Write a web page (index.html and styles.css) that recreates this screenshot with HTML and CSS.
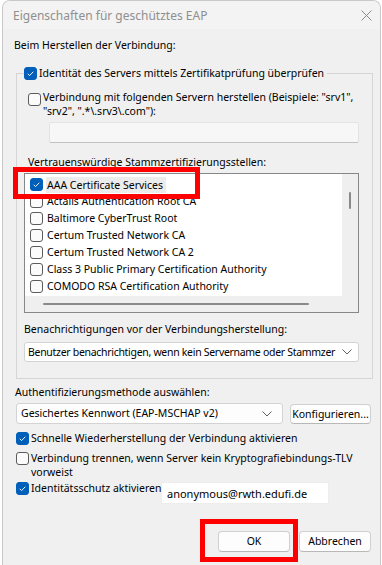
FILE: index.html
```html
<!DOCTYPE html>
<html lang="de">
<head>
    <meta charset="UTF-8">
    <meta name="viewport" content="width=device-width, initial-scale=1.0">
    <title>Eigenschaften für geschütztes EAP</title>
    <link rel="stylesheet" href="styles.css">
</head>
<body>
    <div class="window">
        <div class="titlebar">
            <span class="title">Eigenschaften für geschütztes EAP</span>
            <svg class="close" width="11" height="11" viewBox="0 0 11 11">
                <path d="M0.5 0.5 L10.5 10.5 M10.5 0.5 L0.5 10.5" stroke="#8a8a8a" stroke-width="1" fill="none"/>
            </svg>
        </div>

        <div class="heading">Beim Herstellen der Verbindung:</div>

        <fieldset class="group">
            <legend class="check-row">
                <span class="cb on"><svg viewBox="0 0 13 13"><path d="M3.2 6.8 L5.4 9 L9.8 4.4" /></svg></span>
                <span>Identität des Servers mittels Zertifikatprüfung überprüfen</span>
            </legend>

            <div class="check-row wrap servers">
                <span class="cb"></span>
                <span>Verbindung mit folgenden Servern herstellen (Beispiele: "srv1",<br>"srv2", ".*\.srv3\.com"):</span>
            </div>
            <div class="server-input"></div>

            <div class="label ca-label">Vertrauenswürdige Stammzertifizierungsstellen:</div>
            <div class="listbox">
                <div class="list-items">
                    <div class="item"><span class="cb on"><svg viewBox="0 0 13 13"><path d="M3.2 6.8 L5.4 9 L9.8 4.4" /></svg></span><span class="name selected">AAA Certificate Services</span></div>
                    <div class="item"><span class="cb"></span><span class="name">Actalis Authentication Root CA</span></div>
                    <div class="item"><span class="cb"></span><span class="name">Baltimore CyberTrust Root</span></div>
                    <div class="item"><span class="cb"></span><span class="name">Certum Trusted Network CA</span></div>
                    <div class="item"><span class="cb"></span><span class="name">Certum Trusted Network CA 2</span></div>
                    <div class="item"><span class="cb"></span><span class="name">Class 3 Public Primary Certification Authority</span></div>
                    <div class="item"><span class="cb"></span><span class="name">COMODO RSA Certification Authority</span></div>
                </div>
                <div class="vscroll"><div class="vthumb"></div></div>
                <div class="hscroll"><div class="hthumb"></div></div>
                <div class="corner"></div>
            </div>

            <div class="label notify-label">Benachrichtigungen vor der Verbindungsherstellung:</div>
            <div class="combo notify">
                <span class="combo-text">Benutzer benachrichtigen, wenn kein Servername oder Stammzer</span>
                <svg class="chevron" width="10" height="6" viewBox="0 0 10 6"><path d="M0.5 0.5 L5 5 L9.5 0.5" /></svg>
            </div>
        </fieldset>

        <div class="label auth-label">Authentifizierungsmethode auswählen:</div>
        <div class="auth-row">
            <div class="combo method">
                <span class="combo-text">Gesichertes Kennwort (EAP-MSCHAP v2)</span>
                <svg class="chevron" width="10" height="6" viewBox="0 0 10 6"><path d="M0.5 0.5 L5 5 L9.5 0.5" /></svg>
            </div>
            <button class="btn configure">Konfigurieren...</button>
        </div>

        <div class="check-row option fast">
            <span class="cb on"><svg viewBox="0 0 13 13"><path d="M3.2 6.8 L5.4 9 L9.8 4.4" /></svg></span>
            <span>Schnelle Wiederherstellung der Verbindung aktivieren</span>
        </div>
        <div class="check-row wrap option tlv">
            <span class="cb"></span>
            <span>Verbindung trennen, wenn Server kein Kryptografiebindungs-TLV<br>vorweist</span>
        </div>
        <div class="check-row option identity">
            <span class="cb on"><svg viewBox="0 0 13 13"><path d="M3.2 6.8 L5.4 9 L9.8 4.4" /></svg></span>
            <span class="identity-label">Identitätsschutz aktivieren</span>
            <div class="identity-input">anonymous@rwth.edufi.de</div>
        </div>

        <div class="footer">
            <button class="btn ok">OK</button>
            <button class="btn">Abbrechen</button>
        </div>

        <!-- red annotation frames -->
        <div class="mark mark-ca"></div>
        <div class="mark mark-ok"></div>
    </div>
</body>
</html>
```

FILE: styles.css
```css
body {
    margin: 0;
    background: #ffffff;
    font-family: "Segoe UI", "Noto Sans", sans-serif;
    font-size: 10.5px;
    line-height: 15px;
    color: #000000;
}

.window {
    position: relative;
    box-sizing: border-box;
    height: 565px;
    margin: 0 1px 0 2px;
    border: 1px solid #c9c9c9;
    border-bottom: none;
    border-radius: 8px 8px 0 0;
    background: #f0f0f0;
    overflow: hidden;
}

.titlebar {
    height: 28px;
    background: #f3f3f3;
    display: flex;
    align-items: center;
    justify-content: space-between;
    padding: 0 8px 0 10px;
}

.title {
    font-size: 12px;
    color: #8f8f8f;
}

.heading {
    margin: 9px 0 0 11px;
}

/* group box */
.group {
    margin: 13px 7px 0 13px;
    padding: 0 13px 16px 7px;
    border: 1px solid #d5d5d5;
    min-width: 0;
}

.group legend {
    padding: 0 3px 0 0;
}

.check-row {
    display: flex;
    align-items: center;
    gap: 2px;
}

.check-row.wrap {
    align-items: flex-start;
    line-height: 14px;
}

.cb {
    box-sizing: border-box;
    flex: none;
    width: 13px;
    height: 13px;
    border: 1px solid #5c5c5c;
    border-radius: 3px;
    background: #fbfbfb;
}

.cb.on {
    border-color: #005fb8;
    background: #005fb8;
}

.cb svg {
    display: block;
    width: 11px;
    height: 11px;
}

.cb svg path {
    fill: none;
    stroke: #ffffff;
    stroke-width: 1.1;
}

.servers {
    margin: 9px 0 0 4px;
}

.servers .cb {
    margin-top: 3px;
}

.server-input {
    box-sizing: border-box;
    height: 21px;
    margin: 4px 0 0 25px;
    background: #f7f7f7;
    border: 1px solid #e3e3e3;
    border-bottom-color: #c2c2c2;
    border-radius: 2px;
}

.ca-label {
    margin: 12px 0 0 4px;
}

/* list of root CAs */
.listbox {
    box-sizing: border-box;
    height: 140px;
    margin-top: 3px;
    border: 1px solid #86868b;
    display: grid;
    grid-template-columns: 1fr 16px;
    grid-template-rows: 1fr 16px;
}

.list-items {
    background: #ffffff;
    padding-top: 2px;
    overflow: hidden;
}

.item {
    height: 17px;
    display: flex;
    align-items: center;
    padding-left: 5px;
    gap: 4px;
    white-space: nowrap;
}

.name {
    padding: 0 3px 0 1px;
    margin-left: -1px;
}

.name.selected {
    background: #ececec;
    line-height: 16px;
}

.vscroll,
.hscroll,
.corner {
    background: #efefef;
}

.vthumb {
    width: 2px;
    height: 17px;
    margin: 18px 0 0 7px;
    background: #8a8a8a;
    border-radius: 1px;
}

.hthumb {
    height: 2px;
    width: 266px;
    margin: 7px 0 0 18px;
    background: #8a8a8a;
    border-radius: 1px;
}

.notify-label {
    margin-top: 9px;
}

.combo {
    box-sizing: border-box;
    display: flex;
    align-items: center;
    justify-content: space-between;
    gap: 4px;
    background: #fdfdfd;
    border: 1px solid #d3d3d3;
    border-radius: 3px;
    white-space: nowrap;
    overflow: hidden;
}

.chevron {
    flex: none;
}

.chevron path {
    fill: none;
    stroke: #606060;
    stroke-width: 1;
}

.notify {
    height: 20px;
    margin-top: 5px;
    padding: 0 6px 0 3px;
    background: #ffffff;
}

.notify .combo-text {
    letter-spacing: -0.3px;
}

.auth-label {
    margin: 6px 0 0 12px;
}

.auth-row {
    display: flex;
    align-items: flex-start;
    gap: 7px;
    margin: 3px 0 0 13px;
}

.method {
    width: 267px;
    height: 21px;
    padding: 0 10px 0 4px;
}

.btn {
    box-sizing: border-box;
    height: 20px;
    width: 72px;
    padding: 0;
    font: inherit;
    color: #000000;
    background: #fdfdfd;
    border: 1px solid #d0d0d0;
    border-bottom-color: #b8b8b8;
    border-radius: 4px;
}

.configure {
    width: 81px;
    margin-top: 1px;
}

.option {
    margin-left: 13px;
}

.fast {
    margin-top: 7px;
}

.tlv {
    margin-top: 5px;
}

.tlv .cb {
    margin-top: 1px;
}

.identity {
    align-items: flex-start;
    margin-top: 3px;
    line-height: 13px;
}

.identity-label {
    flex: none;
    width: 128px;
    white-space: nowrap;
}

.identity-input {
    box-sizing: border-box;
    width: 168px;
    height: 22px;
    padding: 4px 0 0 5px;
    background: #ffffff;
    border: 1px solid #ededed;
    font-size: 11px;
}

.footer {
    display: flex;
    justify-content: flex-end;
    gap: 9px;
    margin: 27px 9px 0 0;
}

.footer .btn {
    height: 21px;
}

/* red frames drawn over the screenshot */
.mark {
    position: absolute;
    box-sizing: border-box;
    border: 5px solid #ff0000;
}

.mark-ca {
    left: 10px;
    top: 166px;
    width: 187px;
    height: 32px;
}

.mark-ok {
    left: 197px;
    top: 518px;
    width: 98px;
    height: 43px;
}
```
